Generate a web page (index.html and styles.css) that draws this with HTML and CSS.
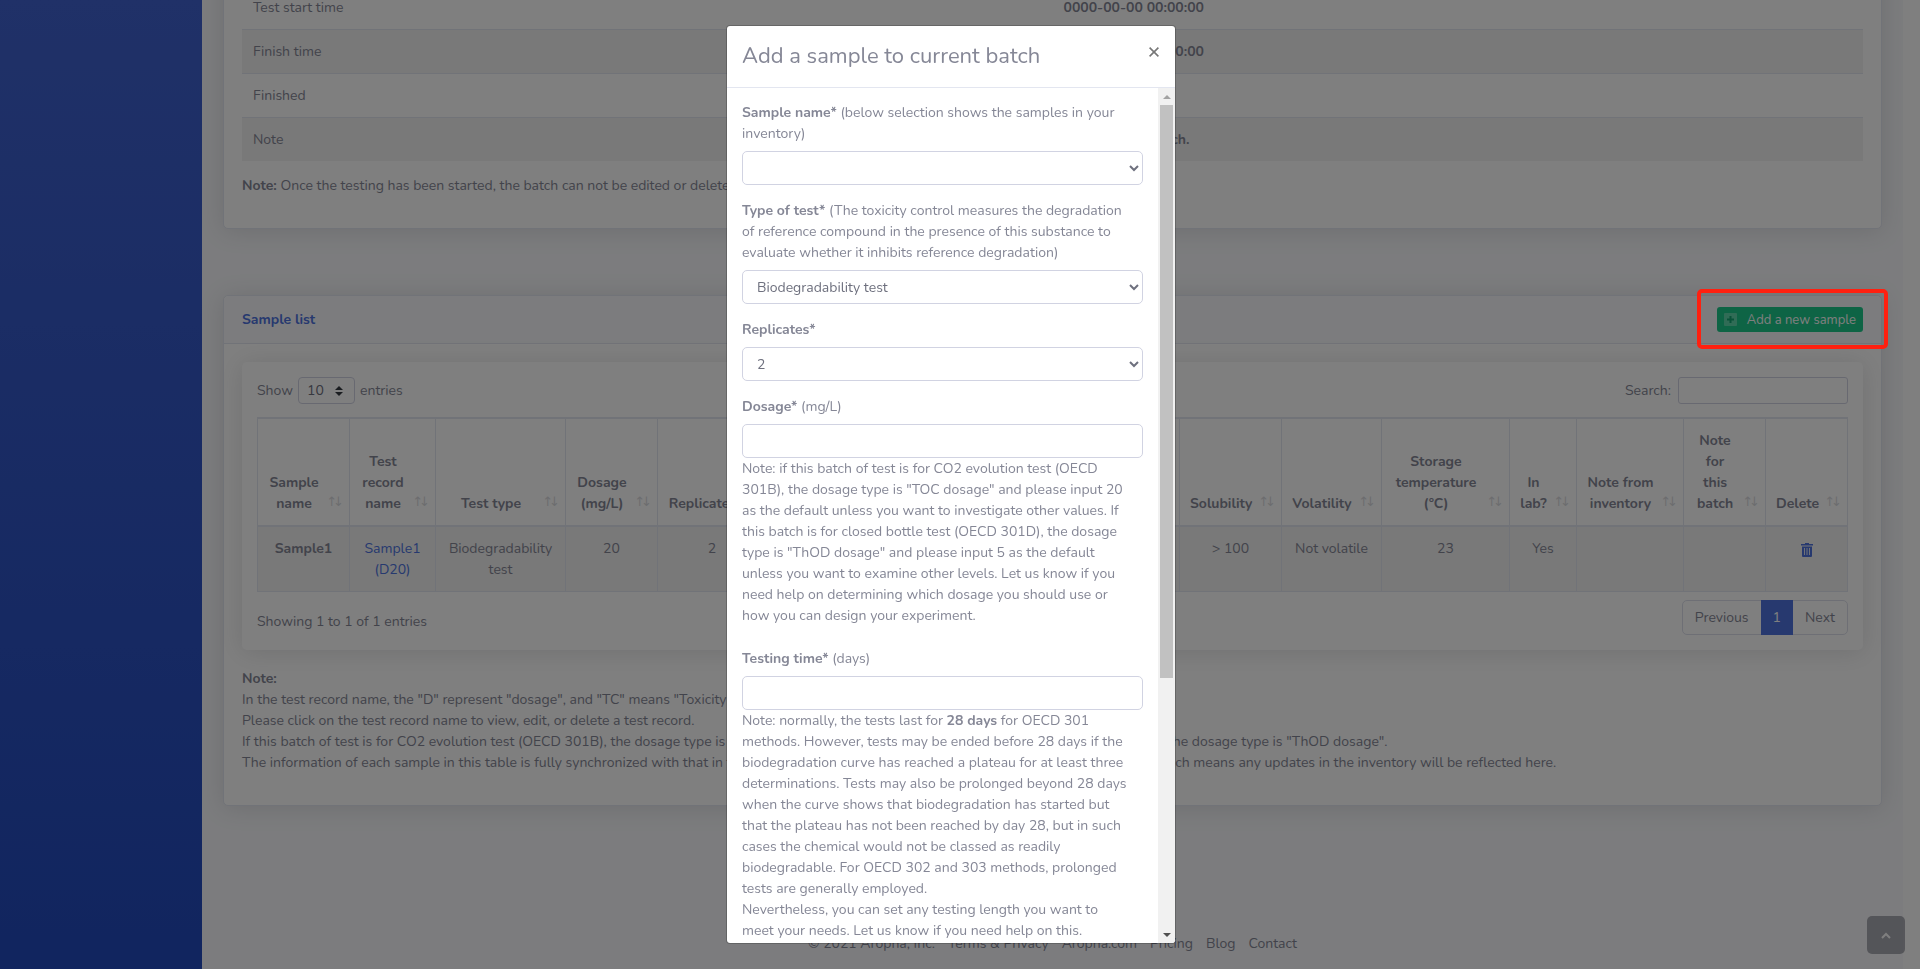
FILE: index.html
```html
<!DOCTYPE html>
<html lang="en">
<head>
  <meta charset="UTF-8">
  <meta name="viewport" content="width=device-width, initial-scale=1.0">
  <title>Batch - Aropha</title>
  <link rel="stylesheet" href="styles.css">
</head>
<body>
  <div id="wrapper">
    <nav class="sidebar"></nav>

    <div class="content">
      <main>
        <section class="card card-batch">
          <div class="card-body">
            <table class="batch-table">
              <tbody>
                <tr><td>Test start time</td><th>0000-00-00 00:00:00</th></tr>
                <tr><td>Finish time</td><th>0000-00-00 00:00:00</th></tr>
                <tr><td>Finished</td><th>No</th></tr>
                <tr><td>Note</td><th>This is a test batch.</th></tr>
              </tbody>
            </table>
            <p><b>Note:</b> Once the testing has been started, the batch can not be edited or deleted.</p>
          </div>
        </section>

        <section class="card">
          <div class="card-header">
            <h6>Sample list</h6>
            <button type="button" class="btn-add">
              <svg width="13" height="13" viewBox="0 0 13 13"><rect width="13" height="13" rx="1" fill="#fff" fill-opacity=".3"/><path d="M6.5 3v7M3 6.5h7" stroke="#13a673" stroke-width="2"/></svg>
              Add a new sample
            </button>
          </div>
          <div class="card-body">
            <div class="table-card">
              <div class="table-tools">
                <label>Show
                  <select class="length-select"><option>10</option><option>25</option></select>
                  entries</label>
                <label>Search: <input type="search" class="search-input"></label>
              </div>

              <table class="sample-table">
                <colgroup>
                  <col class="w-92"><col class="w-86"><col class="w-130"><col class="w-92"><col class="w-109">
                  <col><col><col>
                  <col class="w-102"><col class="w-100"><col class="w-128"><col class="w-67"><col class="w-107"><col class="w-82"><col class="w-82">
                </colgroup>
                <thead>
                  <tr>
                    <th>Sample name</th>
                    <th>Test record name</th>
                    <th>Test type</th>
                    <th>Dosage (mg/L)</th>
                    <th>Replicates</th>
                    <th>Testing time (days)</th>
                    <th>Form</th>
                    <th>Purity (%)</th>
                    <th>Solubility</th>
                    <th>Volatility</th>
                    <th>Storage temperature (°C)</th>
                    <th>In lab?</th>
                    <th>Note from inventory</th>
                    <th>Note for this batch</th>
                    <th>Delete</th>
                  </tr>
                </thead>
                <tbody>
                  <tr>
                    <td><b>Sample1</b></td>
                    <td><a href="#">Sample1 (D20)</a></td>
                    <td>Biodegradability test</td>
                    <td>20</td>
                    <td>2</td>
                    <td>28</td>
                    <td>Solid</td>
                    <td>100</td>
                    <td>&gt; 100</td>
                    <td>Not volatile</td>
                    <td>23</td>
                    <td>Yes</td>
                    <td></td>
                    <td></td>
                    <td>
                      <a href="#" aria-label="Delete sample"><svg width="12" height="14" viewBox="0 0 12 14"><path d="M4 0h4v1h4v1.5H0V1h4zM1 3.5h10V13a1 1 0 0 1-1 1H2a1 1 0 0 1-1-1z" fill="currentColor"/><path d="M3.5 5v7M6 5v7M8.5 5v7" stroke="#f2f2f2" stroke-width=".9"/></svg></a>
                    </td>
                  </tr>
                </tbody>
              </table>

              <div class="table-foot">
                <span>Showing 1 to 1 of 1 entries</span>
                <div class="pagination">
                  <a href="#">Previous</a>
                  <a href="#" class="active">1</a>
                  <a href="#">Next</a>
                </div>
              </div>
            </div>

            <p>
              <b>Note:</b><br>
              In the test record name, the "D" represent "dosage", and "TC" means "Toxicity control".<br>
              Please click on the test record name to view, edit, or delete a test record.<br>
              If this batch of test is for CO2 evolution test (OECD 301B), the dosage type is "TOC dosage", and if this batch is for closed bottle test (OECD 301D), the dosage type is "ThOD dosage".<br>
              The information of each sample in this table is fully synchronized with that in the inventory of samples that belongs to your own Aropha account, which means any updates in the inventory will be reflected here.
            </p>
          </div>
        </section>
      </main>

      <footer>
        <span>© 2021 Aropha, Inc.</span>
        <a href="#">Terms &amp; Privacy</a>
        <a href="#">Aropha.com</a>
        <a href="#">Pricing</a>
        <a href="#">Blog</a>
        <a href="#">Contact</a>
      </footer>
    </div>
  </div>

  <a href="#" class="scroll-top" aria-label="Back to top">
    <svg width="10" height="7" viewBox="0 0 10 7" fill="none" stroke="currentColor" stroke-width="2"><path d="M1 6l4-4 4 4"/></svg>
  </a>

  <div class="backdrop">
    <div class="modal" role="dialog" aria-labelledby="modalTitle">
      <div class="modal-header">
        <h4 id="modalTitle">Add a sample to current batch</h4>
        <button type="button" class="close" aria-label="Close">
          <svg width="10" height="10" viewBox="0 0 10 10" stroke="currentColor" stroke-width="1.6"><path d="M.6.6l8.8 8.8M9.4.6L.6 9.4"/></svg>
        </button>
      </div>
      <div class="modal-main">
        <form class="modal-body">
          <div class="form-group">
            <label for="sampleName"><b>Sample name*</b> (below selection shows the samples in your inventory)</label>
            <select id="sampleName" class="form-control"><option></option><option>Sample1</option></select>
          </div>
          <div class="form-group">
            <label for="testType"><b>Type of test*</b> (The toxicity control measures the degradation of reference compound in the presence of this substance to evaluate whether it inhibits reference degradation)</label>
            <select id="testType" class="form-control"><option>Biodegradability test</option><option>Toxicity control</option></select>
          </div>
          <div class="form-group">
            <label for="replicates"><b>Replicates*</b></label>
            <select id="replicates" class="form-control"><option>2</option><option>3</option></select>
          </div>
          <div class="form-group form-group-note">
            <label for="dosage"><b>Dosage*</b> (mg/L)</label>
            <input id="dosage" type="text" class="form-control">
            <div class="form-note">Note: if this batch of test is for CO2 evolution test (OECD 301B), the dosage type is "TOC dosage" and please input 20 as the default unless you want to investigate other values. If this batch is for closed bottle test (OECD 301D), the dosage type is "ThOD dosage" and please input 5 as the default unless you want to examine other levels. Let us know if you need help on determining which dosage you should use or how you can design your experiment.</div>
          </div>
          <div class="form-group form-group-note">
            <label for="testingTime"><b>Testing time*</b> (days)</label>
            <input id="testingTime" type="text" class="form-control">
            <div class="form-note">Note: normally, the tests last for <b>28 days</b> for OECD 301 methods. However, tests may be ended before 28 days if the biodegradation curve has reached a plateau for at least three determinations. Tests may also be prolonged beyond 28 days when the curve shows that biodegradation has started but that the plateau has not been reached by day 28, but in such cases the chemical would not be classed as readily biodegradable. For OECD 302 and 303 methods, prolonged tests are generally employed.<br>
            Nevertheless, you can set any testing length you want to meet your needs. Let us know if you need help on this.</div>
          </div>
        </form>
        <div class="scrollbar">
          <span class="arrow-up"></span>
          <span class="thumb"></span>
          <span class="arrow-down"></span>
        </div>
      </div>
    </div>
  </div>

  <div class="highlight"></div>
</body>
</html>
```
FILE: styles.css
```css
* {
  box-sizing: border-box;
}

body {
  margin: 0;
  padding-right: 17px;
  height: 100vh;
  overflow: hidden;
  font-family: Nunito, Lato, sans-serif;
  font-size: 14px;
  line-height: 21px;
  color: #858796;
  background-color: #fff;
}

a {
  color: #4e73df;
  text-decoration: none;
}

p {
  margin: 14px 0;
}

select, input, button {
  font-family: inherit;
  font-size: 14px;
  color: #6e707e;
}

#wrapper {
  display: flex;
  height: 100vh;
  overflow: hidden;
}

.sidebar {
  flex: 0 0 202px;
  background: linear-gradient(180deg, #4062d0, #224abe);
}

.content {
  flex: 1;
  min-width: 0;
  display: flex;
  flex-direction: column;
  justify-content: space-between;
  background-color: #f8f9fc;
}

main {
  /* page is scrolled down, first rows are out of view */
  margin-top: -34px;
  padding: 0 21px;
}

/* Cards */
.card {
  background-color: #fff;
  border: 1px solid #e3e6f0;
  border-radius: 5px;
  box-shadow: 0 2px 24px rgba(58, 59, 69, 0.15);
}

.card-batch {
  margin-bottom: 66px;
}

.card-header {
  display: flex;
  align-items: center;
  justify-content: space-between;
  padding: 11px 18px;
  background-color: #f8f9fc;
  border-bottom: 1px solid #e3e6f0;
  border-radius: 5px 5px 0 0;
}

.card-header h6 {
  margin: 0;
  font-size: 14px;
  color: #4e73df;
}

.card-body {
  padding: 18px;
}

.card-body > p:last-child {
  margin-bottom: 14px;
}

.btn-add {
  display: flex;
  align-items: center;
  gap: 10px;
  height: 25px;
  padding: 0 7px;
  border: none;
  border-radius: 3px;
  background-color: #1cc88a;
  font-size: 13px;
  color: #fff;
}

/* Batch details */
.batch-table {
  width: 100%;
  border-spacing: 0;
  table-layout: fixed;
}

.batch-table td,
.batch-table th {
  padding: 11px;
  text-align: left;
  border-top: 1px solid #e3e6f0;
}

.batch-table tr:nth-child(even) {
  background-color: rgba(0, 0, 0, 0.05);
}

/* Sample table */
.table-card {
  margin-bottom: 18px;
  padding: 15px;
  border-radius: 5px;
  box-shadow: 0 2px 24px rgba(58, 59, 69, 0.15);
}

.table-tools {
  display: flex;
  justify-content: space-between;
  margin-bottom: 13px;
}

.table-tools label {
  display: flex;
  align-items: center;
  gap: 5px;
}

.length-select {
  width: 57px;
  height: 27px;
  padding: 0 8px;
  appearance: none;
  border: 1px solid #d1d3e2;
  border-radius: 4px;
  background: #fff url("data:image/svg+xml,%3Csvg xmlns='http://www.w3.org/2000/svg' viewBox='0 0 4 5'%3E%3Cpath fill='%23343a40' d='M2 0L0 2h4zm0 5L0 3h4z'/%3E%3C/svg%3E") no-repeat right 11px center / 8px 10px;
}

.search-input {
  width: 170px;
  height: 27px;
  border: 1px solid #d1d3e2;
  border-radius: 3px;
  margin-left: 2px;
}

.sample-table {
  width: 100%;
  table-layout: fixed;
  border-collapse: separate;
  border-spacing: 0;
  border: 1px solid #e3e6f0;
  border-width: 1px 0 0 1px;
  text-align: center;
}

.sample-table th,
.sample-table td {
  padding: 11px;
  border: 1px solid #e3e6f0;
  border-width: 0 1px 1px 0;
  vertical-align: top;
}

.sample-table th {
  position: relative;
  padding: 11px 29px 11px 10px;
  border-top-width: 1px;
  border-bottom-width: 2px;
  vertical-align: bottom;
}

.sample-table th::after {
  content: "↑↓";
  position: absolute;
  right: 9px;
  bottom: 13px;
  font-family: "DejaVu Sans", sans-serif;
  font-size: 13px;
  font-weight: normal;
  letter-spacing: -4px;
  opacity: 0.3;
}

.sample-table tbody tr {
  background-color: rgba(0, 0, 0, 0.05);
}

.sample-table svg {
  vertical-align: middle;
}

.w-67 { width: 67px; }
.w-82 { width: 82px; }
.w-86 { width: 86px; }
.w-92 { width: 92px; }
.w-100 { width: 100px; }
.w-102 { width: 102px; }
.w-107 { width: 107px; }
.w-109 { width: 109px; }
.w-128 { width: 128px; }
.w-130 { width: 130px; }

.table-foot {
  display: flex;
  align-items: center;
  justify-content: space-between;
  margin-top: 8px;
}

.table-foot > span {
  padding-top: 8px;
}

.pagination {
  display: flex;
  border: 1px solid #dddfeb;
  border-radius: 5px;
}

.pagination a {
  padding: 6px 12px;
  color: #858796;
}

.pagination .active {
  margin: -1px 0;
  padding: 7px 12px;
  background-color: #4e73df;
  color: #fff;
}

footer {
  display: flex;
  justify-content: center;
  gap: 13px;
  padding-bottom: 15px;
}

footer a {
  color: #858796;
}

.scroll-top {
  position: fixed;
  right: 15px;
  bottom: 15px;
  width: 38px;
  height: 38px;
  display: flex;
  align-items: center;
  justify-content: center;
  border-radius: 5px;
  background-color: rgba(90, 92, 105, 0.5);
  color: #fff;
}

/* Modal */
.backdrop {
  position: fixed;
  inset: 0;
  display: flex;
  justify-content: center;
  padding: 25px 18px 25px 0;
  background-color: rgba(0, 0, 0, 0.5);
}

.modal {
  display: flex;
  flex-direction: column;
  width: 450px;
  overflow: hidden;
  background-color: #fff;
  background-clip: padding-box;
  border: 1px solid rgba(0, 0, 0, 0.2);
  border-radius: 4px;
}

.modal-header {
  display: flex;
  justify-content: space-between;
  align-items: flex-start;
  padding: 14px 15px;
  border-bottom: 1px solid #e3e6f0;
}

.modal-header h4 {
  margin: 0;
  font-size: 22px;
  font-weight: normal;
  line-height: 33px;
}

.close {
  display: flex;
  padding: 7px 1px;
  border: none;
  background: none;
  color: #777;
}

.modal-main {
  flex: 1;
  min-height: 0;
  display: flex;
}

.modal-body {
  flex: 1;
  overflow: hidden;
  padding: 14px 15px;
}

.form-group {
  margin-bottom: 15px;
}

.form-group-note {
  margin-bottom: 22px;
}

.form-group label {
  display: block;
  margin-bottom: 7px;
}

.form-group label,
.form-note {
  padding-right: 10px;
}

.form-control {
  display: block;
  width: 100%;
  height: 34px;
  padding: 5px 10px;
  border: 1px solid #d1d3e2;
  border-radius: 5px;
  background-color: #fff;
}

select.form-control {
  padding-right: 0;
}

.scrollbar {
  flex: 0 0 17px;
  display: flex;
  flex-direction: column;
  align-items: center;
  background-color: #f1f1f1;
}

.thumb {
  width: 13px;
  height: 67%;
  margin-bottom: auto;
  background-color: #c1c1c1;
}

.arrow-up,
.arrow-down {
  margin: 7px 0 6px;
  border: 4px solid transparent;
}

.arrow-up {
  border-top: none;
  border-bottom-color: #a3a3a3;
}

.arrow-down {
  border-bottom: none;
  border-top-color: #505050;
}

/* Callout around the add button */
.highlight {
  position: fixed;
  top: 289px;
  right: 32px;
  width: 191px;
  height: 60px;
  border: 4px solid #ff2010;
  border-radius: 5px;
}
```
